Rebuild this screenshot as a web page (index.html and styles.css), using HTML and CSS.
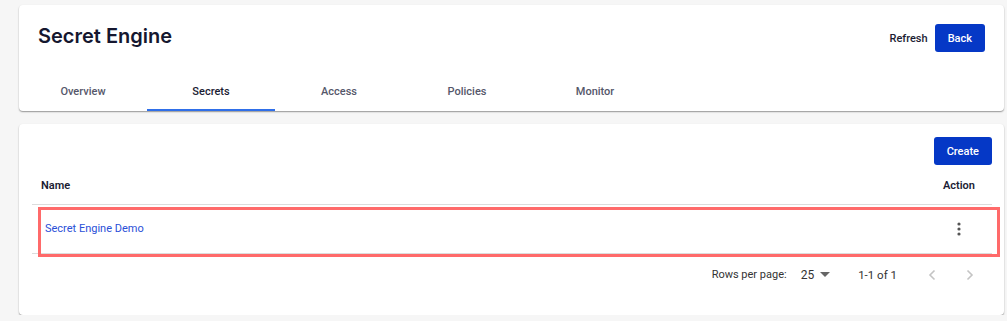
FILE: index.html
```html
<!DOCTYPE html>
<html>
	<head>
		<meta charset="UTF-8">
		<title>Secret Engine</title>
		<link rel="stylesheet" href="styles.css">
	</head>
	<body>
		<div class="page">
			<div class="card head-card">
				<div class="head">
					<h1 class="title">Secret Engine</h1>
					<div class="actions">
						<span class="refresh">Refresh</span>
						<button class="btn">Back</button>
					</div>
				</div>
				<div class="tabs">
					<span class="tab">Overview</span>
					<span class="tab active">Secrets</span>
					<span class="tab">Access</span>
					<span class="tab">Policies</span>
					<span class="tab">Monitor</span>
				</div>
			</div>

			<div class="card list-card">
				<div class="toolbar">
					<button class="btn">Create</button>
				</div>
				<table class="grid">
					<thead>
						<tr>
							<th class="c-name">Name</th>
							<th class="c-act">Action</th>
						</tr>
					</thead>
					<tbody>
						<tr>
							<td class="c-name"><a class="link">Secret Engine Demo</a></td>
							<td class="c-act">
								<svg class="kebab" width="4" height="14" viewBox="0 0 4 14">
									<circle cx="2" cy="2" r="1.6" fill="#555"/>
									<circle cx="2" cy="7" r="1.6" fill="#555"/>
									<circle cx="2" cy="12" r="1.6" fill="#555"/>
								</svg>
							</td>
						</tr>
					</tbody>
				</table>
				<div class="pager">
					<span class="rpp">Rows per page:</span>
					<span class="per">25
						<svg width="10" height="5" viewBox="0 0 10 5"><path d="M0 0 L10 0 L5 5 Z" fill="#666"/></svg>
					</span>
					<span class="range">1-1 of 1</span>
					<span class="nav">
						<svg width="24" height="24" viewBox="0 0 24 24"><path d="M14.5 7.5 L10 12 L14.5 16.5" fill="none" stroke="#c4c4c4" stroke-width="1.6"/></svg>
						<svg width="24" height="24" viewBox="0 0 24 24"><path d="M9.5 7.5 L14 12 L9.5 16.5" fill="none" stroke="#c4c4c4" stroke-width="1.6"/></svg>
					</span>
				</div>
				<div class="mark"></div>
			</div>
		</div>
	</body>
</html>
```

FILE: styles.css
```css
*{margin: 0;padding: 0;box-sizing: border-box;}
body{
	background: #f6f6f6;
	font-family: Roboto, "Liberation Sans", sans-serif;
	font-size: 11px;
	color: #1b1c33;
}
.page{
	padding: 5px 3px 0 19px;
	display: flex;
	flex-direction: column;
	gap: 13px;
}
.card{
	background: #fff;
	border-radius: 4px;
	box-shadow: 0 1px 1.5px rgba(0,0,0,0.4);
}
.head{
	display: flex;
	justify-content: space-between;
	align-items: center;
	padding: 19px 19px 0 19px;
	height: 47px;
}
.title{
	font-family: Inter, Roboto, sans-serif;
	font-size: 20px;
	font-weight: 600;
	color: #15172f;
	margin-top: -4px;
}
.actions{
	display: flex;
	align-items: center;
	gap: 7px;
}
.refresh{
	font-weight: 500;
	font-size: 11px;
	color: #1b1c33;
}
.btn{
	border: 0;
	border-radius: 3px;
	background: #0538c6;
	color: #fff;
	font-family: Roboto, sans-serif;
	font-size: 11px;
	font-weight: 500;
	height: 28px;
	padding: 0 13px;
}
.tabs{
	display: flex;
	height: 59px;
	align-items: flex-end;
}
.tab{
	width: 128px;
	height: 39px;
	display: flex;
	align-items: center;
	justify-content: center;
	font-weight: 500;
	font-size: 11px;
	color: #55576a;
	border-bottom: 2px solid transparent;
	padding-top: 2px;
}
.tab.active{
	color: #1b1c33;
	border-bottom-color: #2f6fe9;
}
.list-card{
	position: relative;
	height: 191px;
	padding: 13px 12px 0 13px;
}
.toolbar{
	display: flex;
	justify-content: flex-end;
}
.grid{
	width: 100%;
	border-collapse: collapse;
}
.grid th{
	height: 39px;
	text-align: left;
	font-weight: 600;
	font-size: 11px;
	color: #1b1c33;
	border-bottom: 1px solid #dcdcdc;
	padding-top: 2px;
}
.grid td{
	height: 49px;
	border-bottom: 1px solid #dcdcdc;
}
.grid th.c-name{
	padding-left: 9px;
}
.grid td.c-name{
	padding-left: 13px;
}
.grid .c-act{
	width: 66px;
	text-align: center;
}
.link{
	color: #2a4fd7;
	font-size: 11px;
}
.kebab{
	display: block;
	margin: 0 auto;
}
.pager{
	display: flex;
	justify-content: flex-end;
	align-items: center;
	height: 42px;
	padding-right: 10px;
	color: #333;
	font-size: 11px;
}
.rpp{
	margin-right: 14px;
}
.per{
	font-size: 12px;
	display: flex;
	align-items: center;
	gap: 6px;
	margin-right: 28px;
}
.range{
	font-size: 11.5px;
	margin-right: 23px;
}
.nav{
	display: flex;
	gap: 14px;
}
.nav svg{
	display: block;
}
.mark{
	position: absolute;
	left: 19px;
	top: 83px;
	width: 962px;
	height: 50px;
	border: 3px solid #ff6a6a;
}
```
